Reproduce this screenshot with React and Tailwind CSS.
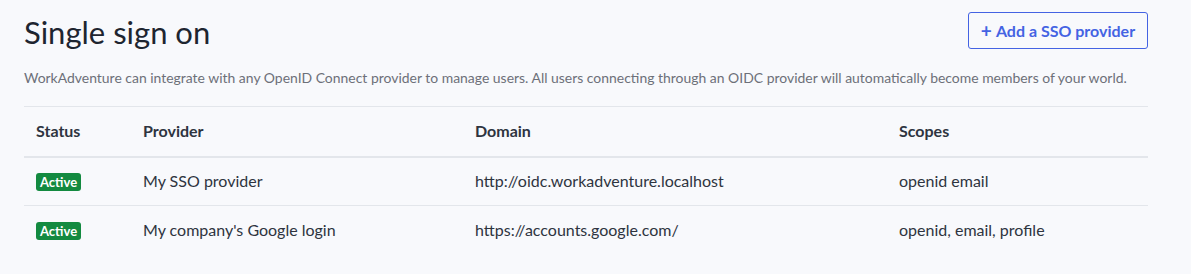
const providers = [
  { name: "My SSO provider", domain: "http://oidc.workadventure.localhost", scopes: "openid email" },
  { name: "My company's Google login", domain: "https://accounts.google.com/", scopes: "openid, email, profile" },
];

const SsoPage = () => {
  return (
    <div className="min-h-[274px] bg-[#f8f9fc] px-6 pt-3 font-['Lato',sans-serif]">
      <div className="flex items-start justify-between pr-[19px]">
        <h1 className="text-[31px] leading-[40px] text-[#1e2530]">Single sign on</h1>
        <button className="flex h-[37px] w-[180px] items-center justify-center gap-1 rounded-[3px] border border-[#4463e3] text-[16px] font-bold text-[#4463e3]">
          <span className="text-[19px] leading-none">+</span>
          <span>Add a SSO provider</span>
        </button>
      </div>
      <p className="mt-4 text-[13.95px] leading-[20px] text-[#6d7079]">
        WorkAdventure can integrate with any OpenID Connect provider to manage users. All users connecting through an OIDC provider will automatically become members of your world.
      </p>
      <table className="mt-[18px] w-[1124px] table-fixed border-collapse text-[16px] text-[#2e3440]">
        <thead>
          <tr className="border-t border-b-2 border-t-[#e3e6eb] border-b-[#e3e6eb]">
            <th className="h-[50px] w-[107px] px-3 text-left font-bold">Status</th>
            <th className="w-[332px] px-3 text-left font-bold">Provider</th>
            <th className="w-[424px] px-3 text-left font-bold">Domain</th>
            <th className="px-3 text-left font-bold">Scopes</th>
          </tr>
        </thead>
        <tbody>
          {providers.map((p, i) => (
            <tr key={p.name} className={i < providers.length - 1 ? "border-b border-[#e3e6eb]" : ""}>
              <td className="h-[49px] px-3">
                <span className="inline-block rounded-[3px] bg-[#138a40] px-[4px] text-[13px] font-bold leading-[18px] text-white">Active</span>
              </td>
              <td className="px-3">{p.name}</td>
              <td className="px-3">{p.domain}</td>
              <td className="px-3">{p.scopes}</td>
            </tr>
          ))}
        </tbody>
      </table>
    </div>
  );
};

export default function App() {
  return <SsoPage />;
}
